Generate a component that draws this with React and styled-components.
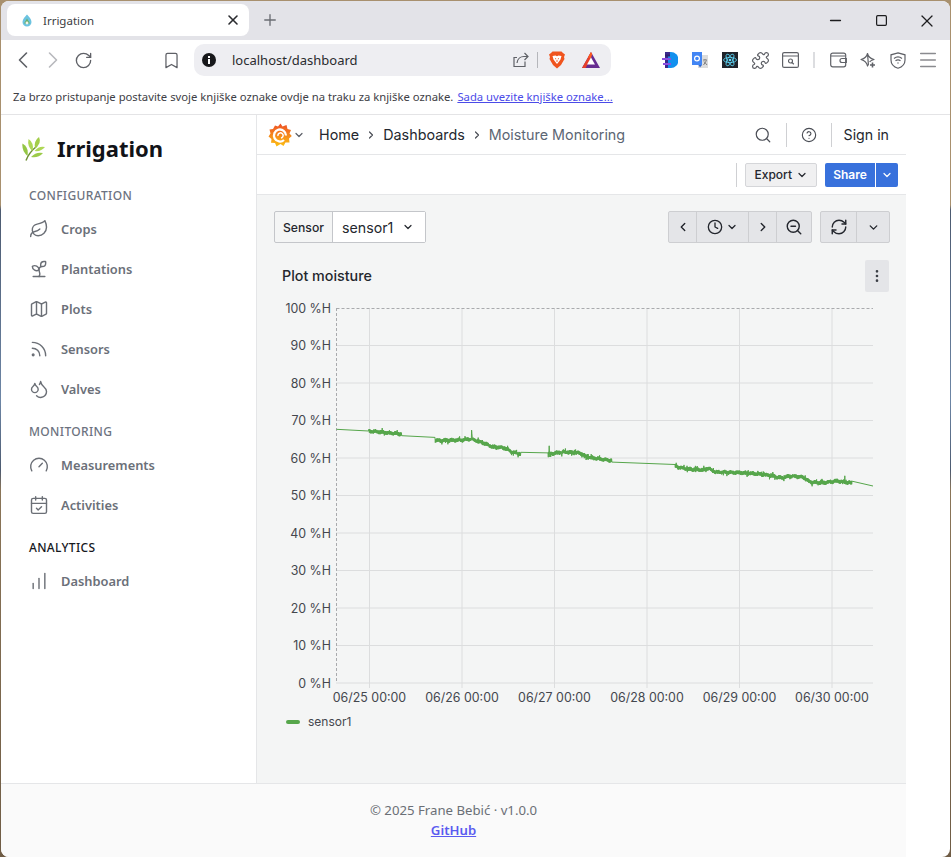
import React from "react";
import styled, { createGlobalStyle } from "styled-components";
import {
  ChevronLeft,
  ChevronRight,
  ChevronDown,
  RotateCw,
  RefreshCw,
  Bookmark,
  Puzzle,
  Menu,
  X,
  Minus,
  Square,
  Plus,
  Leaf,
  Sprout,
  Map as MapIcon,
  Rss,
  Droplets,
  Gauge,
  CalendarCheck,
  ChartNoAxesColumnIncreasing,
  Search,
  CircleHelp,
  Clock,
  ZoomOut,
  MoreVertical,
} from "lucide-react";

const CHROME_FONT = '"Noto Sans", "Open Sans", sans-serif';
const GRAFANA_FONT = 'Inter, "Noto Sans", sans-serif';

const GlobalStyle = createGlobalStyle`
  html, body {
    margin: 0;
    padding: 0;
    height: 857px;
    overflow: hidden;
    background: linear-gradient(180deg, #a8906e 0, #a8906e 205px, #4c5a70 210px, #6d86a6 400px, #4c5a70 470px, #8a7558 490px, #6f5c45 857px);
  }
  * { box-sizing: border-box; }
`;

const BrowserWindow = styled.div`
  display: flex;
  flex-direction: column;
  height: 856px;
  margin: 1px 1px 0;
  background: #fff;
  border-radius: 8px;
  overflow: hidden;
  font-family: ${CHROME_FONT};
`;

const TabStrip = styled.div`
  display: flex;
  align-items: flex-start;
  height: 39px;
  flex: none;
  background: #e3e3e8;
  padding: 3px 0 0 6px;
`;

const Tab = styled.div`
  display: flex;
  align-items: center;
  width: 242px;
  height: 32px;
  padding: 0 8px 0 14px;
  background: #fff;
  border-radius: 8px;
  font-size: 11.5px;
  color: #3b3d42;
`;

const TabTitle = styled.span`
  flex: 1;
  margin-left: 10px;
`;

const NewTab = styled.div`
  display: flex;
  align-items: center;
  justify-content: center;
  width: 30px;
  height: 32px;
  margin-left: 6px;
  color: #6b6d73;
`;

const WindowControls = styled.div`
  display: flex;
  margin-left: auto;
  margin-top: -3px;
`;

const WindowButton = styled.div`
  display: flex;
  align-items: center;
  justify-content: center;
  width: 46px;
  height: 39px;
  color: #1d1d1f;
`;

const Toolbar = styled.div`
  display: flex;
  align-items: center;
  height: 40px;
  flex: none;
  padding-left: 7px;
  background: #fff;
`;

const ToolSlot = styled.div`
  display: flex;
  align-items: center;
  justify-content: center;
  width: 30px;
  height: 32px;
  flex: none;
  color: ${(props) => props.$color || "#5f6167"};
  margin-left: ${(props) => props.$offset || 0}px;
`;

const AddressBar = styled.div`
  display: flex;
  align-items: center;
  flex: none;
  width: 417px;
  height: 32px;
  margin-left: 8px;
  margin-right: 44px;
  padding: 0 11px 0 8px;
  border-radius: 10px;
  background: #eeeef2;
  font-size: 13px;
  color: #2a2b2f;
`;

const AddressText = styled.span`
  flex: 1;
  margin-left: 16px;
`;

const AddressDivider = styled.div`
  width: 1px;
  height: 16px;
  margin: 0 11px 0 8px;
  background: #b5b6bb;
`;

const BatHolder = styled.div`
  display: flex;
  margin-left: 17px;
`;

const ToolDivider = styled.div`
  width: 2px;
  height: 16px;
  margin: 0 8px;
  background: #dcdde0;
`;

const BookmarksBar = styled.div`
  display: flex;
  align-items: center;
  gap: 4px;
  height: 35px;
  flex: none;
  padding: 0 0 1px 12px;
  border-bottom: 1px solid #e4e4e6;
  font-size: 11.28px;
  color: #3e4045;
`;

const BookmarksLink = styled.a`
  color: #4b4be8;
  text-decoration: underline;
`;

const Viewport = styled.div`
  display: flex;
  flex-direction: column;
  flex: 1;
  min-height: 0;
  width: 905px;
`;

const Columns = styled.div`
  display: flex;
  flex: 1;
  min-height: 0;
`;

const Sidebar = styled.aside`
  width: 256px;
  flex: none;
  padding: 0 0 0 28px;
  border-right: 1px solid #e5e6e8;
  background: #fff;
`;

const Brand = styled.div`
  display: flex;
  align-items: center;
  height: 67px;
  margin: 0 0 6px -7px;
  font-size: 22px;
  font-weight: 700;
  color: #111318;
`;

const BrandName = styled.span`
  margin-left: 12px;
  margin-top: -1px;
`;

const SectionLabel = styled.div`
  height: 16px;
  margin-top: ${(props) => (props.$first ? 0 : 15)}px;
  margin-bottom: 5px;
  font-size: 12px;
  line-height: 16px;
  font-weight: 500;
  letter-spacing: 0.35px;
  color: ${(props) => (props.$active ? "#16181d" : "#6c7280")};
`;

const NavItem = styled.div`
  display: flex;
  align-items: center;
  height: 40px;
  gap: 12px;
  font-size: 12.85px;
  font-weight: 600;
  color: #6b7079;
  & > svg { flex: none; color: #6b6f76; }
`;

const Main = styled.main`
  display: flex;
  flex-direction: column;
  flex: 1;
  min-width: 0;
  font-family: ${GRAFANA_FONT};
`;

const TopNav = styled.div`
  display: flex;
  align-items: center;
  height: 40px;
  flex: none;
  padding: 0 17px 0 11px;
  border-bottom: 1px solid #e5e6e8;
  background: #fff;
`;

const CrumbCaret = styled.span`
  display: flex;
  margin: 0 14px 0 1px;
  color: #5b5e66;
`;

const Crumb = styled.span`
  font-size: 14.35px;
  color: ${(props) => (props.$current ? "#5c6674" : "#24272e")};
`;

const CrumbSep = styled.span`
  display: flex;
  margin: 0 6px;
  color: #4a4d55;
`;

const TopActions = styled.div`
  display: flex;
  align-items: center;
  margin-left: auto;
  color: #4b4e56;
`;

const ActionDivider = styled.div`
  width: 1px;
  height: 24px;
  margin: 0 ${(props) => props.$right ?? 14}px 0 14px;
  background: #cfd0d3;
`;

const SignIn = styled.span`
  font-size: 14.2px;
  color: #24272e;
`;

const ActionBar = styled.div`
  display: flex;
  align-items: center;
  justify-content: flex-end;
  height: 40px;
  flex: none;
  padding-right: 8px;
  border-bottom: 1px solid #e5e6e8;
  background: #fff;
`;

const ExportButton = styled.div`
  display: flex;
  align-items: center;
  gap: 4px;
  height: 24px;
  padding: 0 8px;
  margin: 0 8px;
  border: 1px solid #d5d6d9;
  border-radius: 2px;
  background: #f0f0f1;
  font-size: 12px;
  font-weight: 500;
  color: #24272e;
`;

const ShareButton = styled.div`
  display: flex;
  align-items: center;
  justify-content: center;
  width: ${(props) => props.$width}px;
  height: 24px;
  margin-left: ${(props) => props.$gap || 0}px;
  border-radius: ${(props) => props.$radius};
  background: #3871dc;
  color: #fff;
  font-size: 12px;
  font-weight: 600;
`;

const Content = styled.div`
  display: flex;
  flex-direction: column;
  flex: 1;
  padding: 16px 16px 0 17px;
  background: #f4f5f5;
`;

const ControlsRow = styled.div`
  display: flex;
  align-items: center;
  justify-content: space-between;
  height: 32px;
`;

const VariablePicker = styled.div`
  display: flex;
  height: 32px;
  border: 1px solid #c4c6ca;
  border-radius: 2px;
`;

const VariableLabel = styled.div`
  display: flex;
  align-items: center;
  padding: 0 8px;
  border-right: 1px solid #c4c6ca;
  font-size: 12.2px;
  font-weight: 500;
  color: #24272e;
`;

const VariableValue = styled.div`
  display: flex;
  align-items: center;
  gap: 9px;
  padding: 0 11px 0 9px;
  background: #fff;
  font-size: 14.2px;
  color: #24272e;
`;

const ButtonGroup = styled.div`
  display: flex;
  height: 32px;
  margin-left: 8px;
  border: 1px solid #cdced1;
  border-radius: 2px;
  background: #e4e5e8;
`;

const GroupButton = styled.div`
  display: flex;
  align-items: center;
  justify-content: center;
  gap: 3px;
  width: ${(props) => props.$width}px;
  color: #24272e;
  & + & { border-left: 1px solid #cdced1; }
`;

const ControlsRight = styled.div`
  display: flex;
`;

const PanelHeader = styled.div`
  display: flex;
  align-items: center;
  justify-content: space-between;
  height: 32px;
  margin: 17px 0 0 8px;
  font-size: 14.3px;
  font-weight: 500;
  color: #24272e;
`;

const PanelTitle = styled.span`
  margin-top: -2px;
`;

const PanelMenu = styled.div`
  display: flex;
  align-items: center;
  justify-content: center;
  width: 24px;
  height: 32px;
  margin-right: 1px;
  border-radius: 2px;
  background: #e4e5e8;
  color: #3b3e45;
`;

const ChartSvg = styled.svg`
  display: block;
  margin-top: 4px;
  font-family: ${GRAFANA_FONT};
  font-size: 12.4px;
  fill: #44474e;
`;

const Legend = styled.div`
  display: flex;
  align-items: center;
  gap: 8px;
  margin: 6px 0 0 12px;
  font-size: 12px;
  color: #44474e;
`;

const LegendSwatch = styled.span`
  width: 14px;
  height: 4px;
  border-radius: 2px;
  background: #56a64b;
`;

const Footer = styled.footer`
  display: flex;
  flex-direction: column;
  align-items: center;
  justify-content: flex-start;
  gap: 4px;
  height: 74px;
  flex: none;
  padding-top: 18px;
  border-top: 1px solid #e5e6e8;
  background: #fafafa;
  font-size: 13.2px;
  line-height: 16px;
  color: #6b6f76;
`;

const FooterLink = styled.a`
  color: #5b5bf0;
  font-weight: 600;
  text-decoration: underline;
`;

/* ---- chart data ---- */

const interpolate = (knots, x) => {
  for (let i = 0; i < knots.length - 1; i++) {
    const [x0, y0] = knots[i];
    const [x1, y1] = knots[i + 1];
    if (x <= x1) return y0 + ((y1 - y0) * (x - x0)) / (x1 - x0);
  }
  return knots[knots.length - 1][1];
};

const seeded = (seed) => () => {
  seed = (seed + 0x6d2b79f5) | 0;
  let t = Math.imul(seed ^ (seed >>> 15), 1 | seed);
  t = (t + Math.imul(t ^ (t >>> 7), 61 | t)) ^ t;
  return ((t ^ (t >>> 14)) >>> 0) / 4294967296;
};

const NOISY_RUNS = [
  [[369, 431], [385, 432.5], [402, 434]],
  [[435, 440.5], [443, 440.5], [463, 440], [472, 439], [483, 443], [493, 447], [505, 448], [512, 452], [521, 454]],
  [[548, 454], [563, 452], [580, 453], [587, 457], [600, 459], [612, 460.5]],
  [[675, 466.5], [688, 469], [703, 470], [708, 468], [715, 472], [747, 473], [767, 475], [782, 478], [790, 476], [803, 477], [810, 482], [820, 483], [830, 482], [837, 481], [852, 483]],
];

const SPIKES = { 472: -7, 550: 7, 549: -6, 562: 6, 747: 5, 820: 4, 845: -5 };

const buildSeries = () => {
  const random = seeded(42);
  const points = [[336.5, 429.3], [368.5, 431]];
  NOISY_RUNS.forEach((knots) => {
    const start = knots[0][0];
    const end = knots[knots.length - 1][0];
    let side = 1;
    for (let x = start; x <= end; x += 0.3) {
      const spike = SPIKES[Math.round(x)] && random() > 0.7 ? SPIKES[Math.round(x)] : 0;
      const jitter = random() > 0.95 ? 1.6 : 0;
      const wobble = Math.sin(x * 0.9) * 0.5;
      side = -side;
      points.push([x, interpolate(knots, x) + wobble + side * (1.1 + random() * 1 + jitter) + spike]);
    }
  });
  points.push([873, 486]);
  return points.map(([x, y]) => `${x.toFixed(1)},${y.toFixed(1)}`).join(" ");
};

const SERIES = buildSeries();
const Y_TICKS = [100, 90, 80, 70, 60, 50, 40, 30, 20, 10, 0];
const X_TICKS = ["06/25", "06/26", "06/27", "06/28", "06/29", "06/30"];

const MoistureChart = () => (
  <ChartSvg width="616" height="412" viewBox="274 296 616 412">
    {Y_TICKS.map((tick, i) => {
      const y = 308 + i * 37.5;
      return (
        <g key={tick}>
          {tick !== 100 && <line x1="336" x2="873" y1={y} y2={y} stroke="#dcddde" />}
          <text x="331" y={y + 4.5} textAnchor="end">{tick} %H</text>
        </g>
      );
    })}
    {X_TICKS.map((day, i) => {
      const x = 369.5 + i * 92.5;
      return (
        <g key={day}>
          <line x1={x} x2={x} y1="308" y2="688" stroke="#dcddde" />
          <text x={x} y="702" textAnchor="middle">{day} 00:00</text>
        </g>
      );
    })}
    <line x1="336.5" x2="873" y1="308.5" y2="308.5" stroke="#a9aaad" strokeDasharray="3 2" />
    <line x1="336.5" x2="336.5" y1="308" y2="683" stroke="#a9aaad" strokeDasharray="3 2" />
    <polyline points={SERIES} fill="none" stroke="#56a64b" strokeWidth="1" />
  </ChartSvg>
);

/* ---- drawn icons ---- */

const InfoDot = () => (
  <svg width="14" height="14" viewBox="0 0 14 14">
    <circle cx="7" cy="7" r="7" fill="#17181b" />
    <rect x="6" y="6" width="2" height="5" fill="#fff" />
    <rect x="6" y="3" width="2" height="2" fill="#fff" />
  </svg>
);

const ShareArrow = () => (
  <svg width="16" height="16" viewBox="0 0 16 16" fill="none" stroke="#5f6167" strokeWidth="1.2">
    <path d="M12 9.500V14.500H1V5.500H4" />
    <path d="M4 11C4.500 7 7.500 4.500 11 4.500H15M11.500 1L15 4.500L11.500 8" />
  </svg>
);

const BraveIcon = () => (
  <svg width="16" height="18" viewBox="0 0 16 18">
    <path d="M3.500 0.500H12.500L14 2L16 3.500L15 6L15.500 8L12 14L8 17.500L4 14L0.500 8L1 6L0 3.500L2 2Z" fill="#f0541e" />
    <path d="M3.500 5L6.500 4.500L8 5.200L9.500 4.500L12.500 5L11.500 8.500L10 10.500L8 13L6 10.500L4.500 8.500Z" fill="#fff" />
    <path d="M6 7.500L7.200 8M10 7.500L8.800 8M8 9V11" stroke="#f0541e" strokeWidth="0.9" />
  </svg>
);

const BatIcon = () => (
  <svg width="18" height="16" viewBox="0 0 18 16">
    <path d="M9 0L18 16H0Z" fill="#662d91" />
    <path d="M9 0L0 16H3.500L9 6Z" fill="#e8412a" />
    <path d="M9 0L6 5.300L9 6L10.200 2Z" fill="#ff5a1f" />
    <path d="M9 5.500L13 12.500H5Z" fill="#fff" />
  </svg>
);

const ExtensionE = () => (
  <svg width="16" height="16" viewBox="0 0 16 16">
    <path d="M6 0H9A7.500 8 0 0 1 9 16H6Z" fill="#1290ee" />
    <path d="M3 0H8V3H6V16H3Z" fill="#3a2a8c" />
    <rect x="0" y="6" width="9" height="2" fill="#8a4de0" />
    <rect x="1" y="11" width="8" height="2" fill="#8a4de0" />
    <rect x="3" y="2.500" width="5" height="2" fill="#2c2070" />
  </svg>
);

const ExtensionTranslate = () => (
  <svg width="16" height="16" viewBox="0 0 16 16">
    <rect x="6" y="3" width="10" height="13" fill="#dcdcdc" />
    <rect x="0" y="0" width="10" height="13" fill="#4285f4" />
    <path d="M10 13L8 15.500L6.500 13Z" fill="#3367c9" />
    <circle cx="5" cy="6.500" r="2.400" fill="none" stroke="#fff" strokeWidth="1.2" />
    <path d="M11 8H15M13 7V8M11.500 13L14.500 8.500M12 9.500L15 13" stroke="#777" strokeWidth="0.9" fill="none" />
  </svg>
);

const ExtensionReact = () => (
  <svg width="16" height="16" viewBox="0 0 16 16">
    <rect width="16" height="16" fill="#20232a" />
    <g fill="none" stroke="#61dafb" strokeWidth="0.8">
      <ellipse cx="8" cy="8" rx="6.500" ry="2.600" />
      <ellipse cx="8" cy="8" rx="6.500" ry="2.600" transform="rotate(60 8 8)" />
      <ellipse cx="8" cy="8" rx="6.500" ry="2.600" transform="rotate(120 8 8)" />
    </g>
    <circle cx="8" cy="8" r="1.300" fill="#61dafb" />
  </svg>
);

const TabSearch = () => (
  <svg width="17" height="16" viewBox="0 0 17 16" fill="none" stroke="#5f6167" strokeWidth="1.2">
    <rect x="0.600" y="0.600" width="15.800" height="14.800" rx="1.500" />
    <path d="M1 4H16" />
    <circle cx="8.500" cy="9" r="2" />
    <path d="M10 10.500L11.800 12.200" />
  </svg>
);

const BraveWallet = () => (
  <svg width="17" height="16" viewBox="0 0 17 16" fill="none" stroke="#5f6167" strokeWidth="1.2">
    <rect x="0.700" y="1.200" width="15" height="13.600" rx="2" />
    <path d="M1 4H15" />
    <path d="M16.300 6.500H12A1.800 1.800 0 0 0 12 10.500H16.300Z" />
  </svg>
);

const LeoStar = () => (
  <svg width="17" height="17" viewBox="0 0 17 17" fill="none" stroke="#5f6167" strokeWidth="1.2">
    <path d="M7.500 1.500Q8.500 6 14 7.500Q10.500 8.400 9.600 10M8.400 12.500L7.500 14Q6.500 9 1 7.500Q6.500 6 7.500 1.500Z" strokeLinejoin="round" />
    <path d="M12.500 10.500V15.500M10 13H15" strokeWidth="1.6" />
  </svg>
);

const VpnShield = () => (
  <svg width="16" height="17" viewBox="0 0 16 17" fill="none" stroke="#5f6167" strokeWidth="1.2">
    <path d="M8 0.800L15 2.800V8C15 12 12 15 8 16.200C4 15 1 12 1 8V2.800Z" />
    <path d="M4 6.500C6.500 4.500 9.500 4.500 12 6.500M5.500 8.800C7 7.600 9 7.600 10.500 8.800" />
    <circle cx="8" cy="11" r="0.700" fill="#5f6167" stroke="none" />
  </svg>
);

const TabFavicon = () => (
  <svg width="12" height="13" viewBox="0 0 12 13">
    <path d="M6 0.500C8 3 10.500 5 10.500 8A4.500 4.500 0 0 1 1.500 8C1.500 5 4 3 6 0.500Z" fill="#6cc3e0" />
    <path d="M6 4.500L9 9.500H3Z" fill="#6bb06a" />
    <circle cx="6" cy="9" r="1.400" fill="#f2f2e6" />
  </svg>
);

const HerbLogo = () => (
  <svg width="23" height="24" viewBox="0 0 23 24">
    <path d="M4 23.500C6 18 10 13 15 9" fill="none" stroke="#6f9136" strokeWidth="1.5" />
    <path d="M13 11.500Q11.500 4 17 0Q20 6 13 11.500Z" fill="#a2cd48" />
    <path d="M10.500 14Q5 9.500 6.500 2Q12.500 6 10.500 14Z" fill="#aed755" />
    <path d="M5.500 19Q-0.500 14 0.500 6.500Q7 10 5.500 19Z" fill="#94c644" />
    <path d="M12.500 14Q17 8.500 23 10Q19 15 12.500 14Z" fill="#aed755" />
    <path d="M9 20Q14 14.500 21 16Q16 21.500 9 20Z" fill="#9ccb4a" />
  </svg>
);

const GrafanaLogo = () => (
  <svg width="24" height="24" viewBox="0 0 24 24">
    <defs>
      <linearGradient id="grafana-fill" x1="0.5" y1="1" x2="0.5" y2="0">
        <stop offset="0" stopColor="#fcc012" />
        <stop offset="1" stopColor="#ee4f27" />
      </linearGradient>
    </defs>
    <path
      d="M12.500 0.500L14.500 3.500L18.500 2L19.500 6L23 7L21.500 10.500L23.800 13L21 15.500L21.500 19.500L17.500 19.500L15.500 23L12.500 21L8.500 23.500L7 20L3 19.800L3.500 16L0.500 13.500L2.500 10.500L1.500 6.500L5 6L7 2.500L10 3.500Z"
      fill="url(#grafana-fill)"
    />
    <path d="M16 17A6 6 0 1 1 18 12.500" fill="none" stroke="#fff" strokeWidth="2.300" />
    <path d="M10 13A2.600 2.600 0 1 1 13 15" fill="none" stroke="#fff" strokeWidth="1.500" />
  </svg>
);

const NAV_SECTIONS = [
  {
    title: "CONFIGURATION",
    items: [
      ["Crops", Leaf],
      ["Plantations", Sprout],
      ["Plots", MapIcon],
      ["Sensors", Rss],
      ["Valves", Droplets],
    ],
  },
  {
    title: "MONITORING",
    items: [
      ["Measurements", Gauge],
      ["Activities", CalendarCheck],
    ],
  },
  {
    title: "ANALYTICS",
    active: true,
    items: [["Dashboard", ChartNoAxesColumnIncreasing]],
  },
];

function App() {
  return (
    <>
      <GlobalStyle />
      <BrowserWindow>
        <TabStrip>
          <Tab>
            <TabFavicon />
            <TabTitle>Irrigation</TabTitle>
            <X size={16} strokeWidth={2.4} color="#2a2b2f" />
          </Tab>
          <NewTab><Plus size={18} strokeWidth={1.8} /></NewTab>
          <WindowControls>
            <WindowButton><Minus size={17} strokeWidth={1.3} absoluteStrokeWidth /></WindowButton>
            <WindowButton><Square size={13} strokeWidth={1.2} absoluteStrokeWidth /></WindowButton>
            <WindowButton><X size={20} strokeWidth={1.2} absoluteStrokeWidth /></WindowButton>
          </WindowControls>
        </TabStrip>

        <Toolbar>
          <ToolSlot><ChevronLeft size={28} strokeWidth={1.4} /></ToolSlot>
          <ToolSlot $color="#b8b9bd"><ChevronRight size={28} strokeWidth={1.4} /></ToolSlot>
          <ToolSlot><RotateCw size={19} strokeWidth={1.7} /></ToolSlot>
          <ToolSlot $offset={58}><Bookmark size={19} strokeWidth={1.6} /></ToolSlot>
          <AddressBar>
            <InfoDot />
            <AddressText>localhost/dashboard</AddressText>
            <ShareArrow />
            <AddressDivider />
            <BraveIcon />
            <BatHolder><BatIcon /></BatHolder>
          </AddressBar>
          <ToolSlot><ExtensionE /></ToolSlot>
          <ToolSlot><ExtensionTranslate /></ToolSlot>
          <ToolSlot><ExtensionReact /></ToolSlot>
          <ToolSlot><Puzzle size={19} strokeWidth={1.5} /></ToolSlot>
          <ToolSlot><TabSearch /></ToolSlot>
          <ToolDivider />
          <ToolSlot><BraveWallet /></ToolSlot>
          <ToolSlot><LeoStar /></ToolSlot>
          <ToolSlot><VpnShield /></ToolSlot>
          <ToolSlot $color="#8a8b8f"><Menu size={22} strokeWidth={1.6} /></ToolSlot>
        </Toolbar>

        <BookmarksBar>
          Za brzo pristupanje postavite svoje knjiške oznake ovdje na traku za knjiške oznake.
          <BookmarksLink>Sada uvezite knjiške oznake...</BookmarksLink>
        </BookmarksBar>

        <Viewport>
          <Columns>
            <Sidebar>
              <Brand>
                <HerbLogo />
                <BrandName>Irrigation</BrandName>
              </Brand>
              {NAV_SECTIONS.map((section, i) => (
                <div key={section.title}>
                  <SectionLabel $first={i === 0} $active={section.active}>{section.title}</SectionLabel>
                  {section.items.map(([label, Icon]) => (
                    <NavItem key={label}>
                      <Icon size={20} strokeWidth={1.7} />
                      {label}
                    </NavItem>
                  ))}
                </div>
              ))}
            </Sidebar>

            <Main>
              <TopNav>
                <GrafanaLogo />
                <CrumbCaret><ChevronDown size={12} strokeWidth={2.4} /></CrumbCaret>
                <Crumb>Home</Crumb>
                <CrumbSep><ChevronRight size={12} strokeWidth={2.4} /></CrumbSep>
                <Crumb>Dashboards</Crumb>
                <CrumbSep><ChevronRight size={12} strokeWidth={2.4} /></CrumbSep>
                <Crumb $current>Moisture Monitoring</Crumb>
                <TopActions>
                  <Search size={18} strokeWidth={1.6} />
                  <ActionDivider />
                  <CircleHelp size={16} strokeWidth={1.7} />
                  <ActionDivider $right={12} />
                  <SignIn>Sign in</SignIn>
                </TopActions>
              </TopNav>

              <ActionBar>
                <ActionDivider $right={0} />
                <ExportButton>Export <ChevronDown size={12} strokeWidth={2.4} /></ExportButton>
                <ShareButton $width={50} $radius="2px 0 0 2px">Share</ShareButton>
                <ShareButton $width={22} $gap={1} $radius="0 2px 2px 0"><ChevronDown size={12} strokeWidth={2.4} /></ShareButton>
              </ActionBar>

              <Content>
                <ControlsRow>
                  <VariablePicker>
                    <VariableLabel>Sensor</VariableLabel>
                    <VariableValue>sensor1 <ChevronDown size={12} strokeWidth={2.4} /></VariableValue>
                  </VariablePicker>
                  <ControlsRight>
                    <ButtonGroup>
                      <GroupButton $width={27}><ChevronLeft size={14} strokeWidth={2.4} /></GroupButton>
                      <GroupButton $width={52}><Clock size={16} strokeWidth={2} /><ChevronDown size={12} strokeWidth={2.6} /></GroupButton>
                      <GroupButton $width={28}><ChevronRight size={14} strokeWidth={2.4} /></GroupButton>
                      <GroupButton $width={35}><ZoomOut size={18} strokeWidth={1.9} /></GroupButton>
                    </ButtonGroup>
                    <ButtonGroup>
                      <GroupButton $width={35}><RefreshCw size={18} strokeWidth={1.9} /></GroupButton>
                      <GroupButton $width={33}><ChevronDown size={13} strokeWidth={2.6} /></GroupButton>
                    </ButtonGroup>
                  </ControlsRight>
                </ControlsRow>

                <PanelHeader>
                  <PanelTitle>Plot moisture</PanelTitle>
                  <PanelMenu><MoreVertical size={16} /></PanelMenu>
                </PanelHeader>
                <MoistureChart />
                <Legend><LegendSwatch />sensor1</Legend>
              </Content>
            </Main>
          </Columns>

          <Footer>
            <span>© 2025 Frane Bebić · v1.0.0</span>
            <FooterLink>GitHub</FooterLink>
          </Footer>
        </Viewport>
      </BrowserWindow>
    </>
  );
}

export default App;
